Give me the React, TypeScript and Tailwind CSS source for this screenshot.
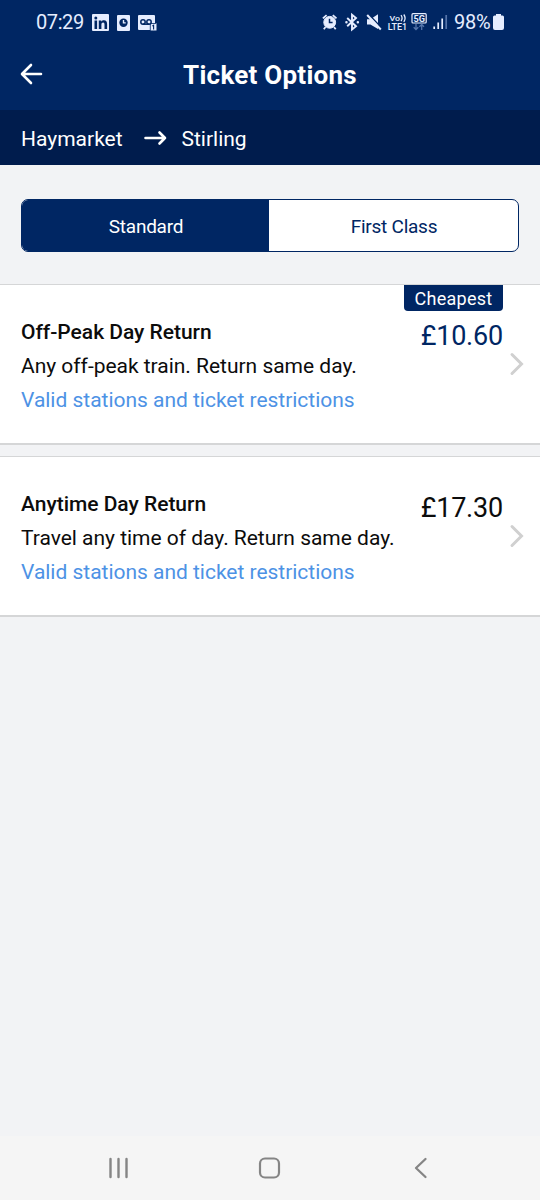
/**
 * Ticket options screen: class selector and the list of fares for a route.
 */
interface Ticket {
    name: string;
    description: string;
    price: string;
    cheapest?: boolean;
}

const TICKETS: Ticket[] = [
    {
        name: "Off-Peak Day Return",
        description: "Any off-peak train. Return same day.",
        price: "£10.60",
        cheapest: true,
    },
    {
        name: "Anytime Day Return",
        description: "Travel any time of day. Return same day.",
        price: "£17.30",
    },
];

function StatusBar() {
    return (
        <div className="flex h-11 items-center pl-9 pr-[35px] text-[#e6edff]">
            <span className="w-[55px] text-[20px] leading-6 tracking-[-0.4px] whitespace-nowrap">07:29</span>
            {/* Notifications */}
            <svg className="-ml-px" width="70" height="44" viewBox="90 0 70 44">
                <rect x="92" y="14" width="17" height="17" rx="1" fill="currentColor" />
                <g fill="#002663">
                    <path d="M94.5 20.5h2.6V29h-2.6zM98.8 20.5h2.5v1.2c.6-.9 1.4-1.4 2.7-1.4 2.2 0 3.1 1.3 3.1 3.8V29h-2.6v-4.4c0-1.3-.4-2-1.4-2s-1.7.7-1.7 2V29h-2.6z" />
                    <circle cx="95.8" cy="17.9" r="1.5" />
                </g>
                <rect x="117" y="15" width="13" height="16" rx="1" fill="currentColor" />
                <circle cx="123.5" cy="22.7" r="4.2" fill="#002663" />
                <path d="M123.5 20v2.9h2.2" fill="none" stroke="currentColor" strokeWidth="1.4" />
                <path d="M139 15h15q1 0 1 1v7h1.5v7.500h-6V30H139q-1 0-1-1V16q0-1 1-1z" fill="currentColor" />
                <g fill="none" stroke="#002663" strokeWidth="1.5">
                    <circle cx="143" cy="22" r="2.2" />
                    <circle cx="149" cy="22" r="2.2" />
                    <path d="M143 24.2h6" />
                    <path d="M150.3 30.500v-7h6" strokeWidth="0.8" />
                    <path d="M152.400 25.900l1.200-.7v4.300" strokeWidth="1.1" />
                </g>
            </svg>
            {/* System indicators */}
            <svg className="ml-auto" width="140" height="44" viewBox="320 0 140 44">
                <g fill="none" stroke="currentColor">
                    <circle cx="329.7" cy="22.3" r="5.9" fill="currentColor" strokeWidth="1" />
                    <path d="M322.9 18.4l3.7-3.3M336.5 18.4l-3.7-3.3M325.5 27l-1.7 2.3M334 27l1.7 2.3" strokeWidth="1.8" />
                    <path d="M329.5 18.7v3.9h3.1" stroke="#002663" strokeWidth="1.5" />
                    <path d="M347.2 18l8.800 8.300-4 3.200V14.800l4 3.200-8.800 8.300" strokeWidth="1.900" />
                    <path d="M346.400 22.200h.1M357.800 22.200h.1" strokeWidth="2.400" strokeLinecap="round" />
                </g>
                <path d="M367 19.2h3.4l7.6-5V29l-7.6-4.4H367z" fill="currentColor" />
                <path d="M368.700 14.200l13.600 14.500" stroke="#002663" strokeWidth="1.6" />
                <path d="M367.200 15l13.600 14.500" stroke="currentColor" strokeWidth="2" />
                <g fill="currentColor" fontWeight="500">
                    <text x="389.500" y="21" fontSize="8" textLength="10.500" lengthAdjust="spacingAndGlyphs">Vo</text>
                    <text x="387.700" y="30" fontSize="9" textLength="19.500" lengthAdjust="spacingAndGlyphs">LTE1</text>
                </g>
                <path d="M401 15.200q2.200 3 0 6M403.800 14.500q2.600 3.600 0 7.400" fill="none" stroke="currentColor" strokeWidth="1.3" />
                <rect x="412" y="13.700" width="14.200" height="9.300" rx="1" fill="none" stroke="currentColor" strokeWidth="1.2" />
                <text x="413.500" y="21.700" fill="currentColor" fontSize="9.500" fontWeight="700" textLength="11.500" lengthAdjust="spacingAndGlyphs">5G</text>
                <path d="M416 24v5.500m-2.300-2.200l2.300 2.200 2.300-2.200M421.700 30v-5.500m-2.300 2.200l2.300-2.200 2.300 2.200" fill="none" stroke="#5575aa" strokeWidth="1.3" />
                <path d="M434.200 26.500V29M438.200 22.500V29M442.200 18.500V29" stroke="currentColor" strokeWidth="1.7" />
                <path d="M446.200 15v14" stroke="#5575aa" strokeWidth="1.7" />
            </svg>
            <span className="-ml-[6px] w-[37px] text-[20px] leading-6 tracking-[-0.2px] whitespace-nowrap">98%</span>
            <svg className="ml-[2px] mr-px shrink-0" width="11" height="18" viewBox="0 0 11 18">
                <path d="M3 1h5v1.500h1.500q1.500 0 1.500 1.500v11q0 2-2 2H2q-2 0-2-2V4q0-1.500 1.500-1.500H3z" fill="currentColor" />
            </svg>
        </div>
    );
}

function TicketCard({ ticket }: { ticket: Ticket }) {
    return (
        <article className="relative flex h-[161px] border-t border-b-2 border-[#d5d6d7] bg-white pl-[21px] pr-[16px]">
            {ticket.cheapest && (
                <span className="absolute top-0 right-[37px] flex h-[26px] w-[99px] items-center justify-center rounded-b-[4px] bg-[#002663] pt-px text-[18px] tracking-[0.25px] text-white">
                    Cheapest
                </span>
            )}
            <div className="flex-1 pt-[30px] text-[21px] leading-[34px] tracking-[-0.02px] whitespace-nowrap text-[#0c0c0c]">
                <h2 className="font-medium">{ticket.name}</h2>
                <p>{ticket.description}</p>
                <a className="text-[#4d92e5]">Valid stations and ticket restrictions</a>
            </div>
            <p className={`pt-[34px] text-[27px] leading-[34px] tracking-[-0.2px] ${ticket.cheapest ? "text-[#002663]" : "text-[#0c0c0c]"}`}>
                {ticket.price}
            </p>
            <svg className="mt-[67px] ml-[6px]" width="15" height="24" viewBox="0 0 15 24">
                <path d="M3 2.500L12.500 12 3 21.500" fill="none" stroke="#d0d0d0" strokeWidth="3" strokeLinecap="round" />
            </svg>
        </article>
    );
}

export default function App() {
    return (
        <main className="flex h-[1200px] w-[540px] flex-col overflow-hidden bg-[#f2f3f5] font-['Roboto',sans-serif]">
            <header className="h-[110px] bg-[#002663] text-white">
                <StatusBar />
                <div className="flex h-[62px] items-center pl-[20px]">
                    <svg width="24" height="24" viewBox="0 0 24 24" fill="none" stroke="currentColor" strokeWidth="2.600" strokeLinecap="round" strokeLinejoin="round">
                        <path d="M21 11H2.500M11 2l-9 9 9 9" />
                    </svg>
                    <h1 className="flex-1 pr-[44px] text-center text-[26px] font-bold tracking-[0.25px]">Ticket Options</h1>
                </div>
            </header>

            {/* Route */}
            <div className="flex h-[55px] items-center bg-[#001c4d] pt-[5px] pl-[21px] text-[21px] text-white">
                <span className="w-[122px]">Haymarket</span>
                <svg className="mb-[4px]" width="24" height="16" viewBox="0 0 24 16" fill="none" stroke="currentColor" strokeWidth="2.600" strokeLinecap="round" strokeLinejoin="round">
                    <path d="M2.500 8h19.500M16.500 2.500L22 8l-5.500 5.500" />
                </svg>
                <span className="ml-[14.500px]">Stirling</span>
            </div>

            {/* Travel class */}
            <div className="mx-[21px] mt-[34px] flex h-[53px] shrink-0 overflow-hidden rounded-[7px] border-[1.500px] border-[#002663] bg-white text-[19px] tracking-[-0.25px]">
                <button className="w-[247px] bg-[#002663] pt-[3px] pl-px text-white">Standard</button>
                <button className="flex-1 pt-[3px] pl-px text-[#002663]">First Class</button>
            </div>

            <section className="mt-[32px] flex flex-col gap-[11px]">
                {TICKETS.map((ticket) => (
                    <TicketCard key={ticket.name} ticket={ticket} />
                ))}
            </section>

            {/* System navigation */}
            <nav className="mt-auto flex h-16 items-center bg-[#f5f5f5] pl-[108px]">
                <svg width="22" height="22" viewBox="0 0 22 22" stroke="#858585" strokeWidth="2.400" strokeLinecap="round">
                    <path d="M2.500 2v18M10.500 2v18M18.500 2v18" />
                </svg>
                <svg className="ml-[128px]" width="24" height="24" viewBox="0 0 24 24" fill="none" stroke="#858585" strokeWidth="2.200">
                    <rect x="2" y="2.500" width="19" height="19" rx="5" />
                </svg>
                <svg className="ml-[132px]" width="14" height="22" viewBox="0 0 14 22" fill="none" stroke="#858585" strokeWidth="2.300" strokeLinecap="round" strokeLinejoin="round">
                    <path d="M11.500 2L2 11l9.500 9" />
                </svg>
            </nav>
        </main>
    );
}
